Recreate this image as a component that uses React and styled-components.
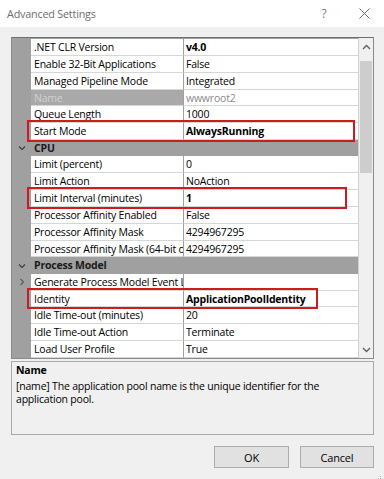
import React from "react";
import styled, { createGlobalStyle } from "styled-components";

const Global = createGlobalStyle`
  html, body { margin: 0; padding: 0; background: #f0f0f0; }
  body { font-family: "Open Sans", "Noto Sans", sans-serif; font-size: 10.5px; letter-spacing: -0.2px; color: #000; }
  * { box-sizing: border-box; }
`;

const Window = styled.div`
  width: 384px;
  height: 479px;
  background: #f0f0f0;
  position: relative;
  display: flex;
  flex-direction: column;
  overflow: hidden;
`;

const TitleBar = styled.div`
  height: 27px;
  background: #ffffff;
  display: flex;
  align-items: center;
  padding-left: 7px;
  color: #6d6d6d;
  font-size: 10.8px;
`;

const Title = styled.div`
  flex: 1;
`;

const TitleBtn = styled.div`
  width: 40px;
  display: flex;
  justify-content: center;
  color: #7a7a7a;
  font-size: 12px;
`;

const Body = styled.div`
  padding: 10px 10px 0 11px;
  display: flex;
  flex-direction: column;
`;

const Grid = styled.div`
  display: flex;
  border: 1px solid #8a8a8a;
  border-top-color: #6f6f6f;
  height: 322px;
  background: #a0a0a0;
`;

const Rows = styled.div`
  flex: 1;
  display: flex;
  flex-direction: column;
  padding-top: 1px;
`;

const Row = styled.div`
  position: relative;
  height: 16.85px;
  display: grid;
  grid-template-columns: 19px 153px 1fr;
  line-height: 16px;
`;

const Gutter = styled.div`
  background: #a0a0a0;
  display: flex;
  align-items: center;
  justify-content: center;
  color: #4a4a4a;
`;

const Label = styled.div`
  background: ${(p) => (p.$selected ? "#a9a9a9" : "#ffffff")};
  color: ${(p) => (p.$selected ? "#d0d0d0" : "#000")};
  border-bottom: 1px solid #d6d6d6;
  border-right: 1px solid #a0a0a0;
  padding-left: 3px;
  white-space: nowrap;
  overflow: hidden;
`;

const Value = styled.div`
  background: #ffffff;
  color: ${(p) => (p.$dim ? "#8a8a8a" : "#000")};
  font-weight: ${(p) => (p.$bold ? 700 : 400)};
  border-bottom: 1px solid #d6d6d6;
  padding-left: 2px;
  white-space: nowrap;
  overflow: hidden;
`;

const Category = styled.div`
  background: #a0a0a0;
  font-weight: 700;
  color: #1a1a1a;
  padding-left: 3px;
  grid-column: 2 / 4;
`;

const Mark = styled.div`
  position: absolute;
  z-index: 2;
  top: -3px;
  bottom: -2px;
  left: 15px;
  border: 2.5px solid #cf1a1f;
  pointer-events: none;
`;

const Scrollbar = styled.div`
  width: 15px;
  background: #f0f0f0;
  border-left: 1px solid #cfcfcf;
  display: flex;
  flex-direction: column;
`;

const ScrollBtn = styled.div`
  height: 17px;
  display: flex;
  align-items: center;
  justify-content: center;
`;

const Thumb = styled.div`
  margin: 6px 1px 0 1px;
  height: 112px;
  background: #cdcdcd;
`;

const Track = styled.div`
  flex: 1;
`;

const Desc = styled.div`
  margin-top: 2px;
  height: 74px;
  border: 1px solid #a9a9a9;
  padding: 2px 4px;
  line-height: 13.5px;
`;

const DescTitle = styled.div`
  font-weight: 700;
  margin-bottom: 2px;
`;

const Buttons = styled.div`
  display: flex;
  justify-content: flex-end;
  gap: 11px;
  padding: 11px 0 0 0;
`;

const Button = styled.div`
  width: ${(p) => p.$w}px;
  height: 22px;
  background: #e1e1e1;
  border: 1px solid #adadad;
  display: flex;
  align-items: center;
  justify-content: center;
  font-size: 11px;
`;

const Grip = styled.div`
  position: absolute;
  right: 2px;
  bottom: 2px;
  width: 6px;
  height: 6px;
`;

const Chevron = ({ dir }) => (
  <svg width="8" height="8" viewBox="0 0 8 8">
    {dir === "down" ? (
      <path d="M1 2.5 L4 5.5 L7 2.5" fill="none" stroke="#3c3c3c" strokeWidth="1.1" />
    ) : (
      <path d="M2.5 1 L5.5 4 L2.5 7" fill="none" stroke="#5a5a5a" strokeWidth="1.1" />
    )}
  </svg>
);

const ArrowIcon = ({ up }) => (
  <svg width="9" height="6" viewBox="0 0 9 6">
    <path
      d={up ? "M1 5 L4.5 1.5 L8 5" : "M1 1 L4.5 4.5 L8 1"}
      fill="none"
      stroke="#606060"
      strokeWidth="1.4"
    />
  </svg>
);

const data = [
  { l: ".NET CLR Version", v: "v4.0", bold: true },
  { l: "Enable 32-Bit Applications", v: "False" },
  { l: "Managed Pipeline Mode", v: "Integrated" },
  { l: "Name", v: "wwwroot2", selected: true, dim: true },
  { l: "Queue Length", v: "1000" },
  { l: "Start Mode", v: "AlwaysRunning", bold: true, mark: 328 },
  { cat: "CPU" },
  { l: "Limit (percent)", v: "0" },
  { l: "Limit Action", v: "NoAction" },
  { l: "Limit Interval (minutes)", v: "1", bold: true, mark: 320 },
  { l: "Processor Affinity Enabled", v: "False" },
  { l: "Processor Affinity Mask", v: "4294967295" },
  { l: "Processor Affinity Mask (64-bit option)", v: "4294967295" },
  { cat: "Process Model" },
  { l: "Generate Process Model Event Log Entry", v: "", expand: true },
  { l: "Identity", v: "ApplicationPoolIdentity", bold: true, mark: 291 },
  { l: "Idle Time-out (minutes)", v: "20" },
  { l: "Idle Time-out Action", v: "Terminate" },
  { l: "Load User Profile", v: "True" },
];

export default function App() {
  return (
    <Window>
      <Global />
      <TitleBar>
        <Title>Advanced Settings</Title>
        <TitleBtn>?</TitleBtn>
        <TitleBtn>
          <svg width="11" height="11" viewBox="0 0 11 11">
            <path d="M0.5 0.5 L10.5 10.5 M10.5 0.5 L0.5 10.5" stroke="#6a6a6a" strokeWidth="1" />
          </svg>
        </TitleBtn>
      </TitleBar>
      <Body>
        <Grid>
          <Rows>
            {data.map((r, i) =>
              r.cat ? (
                <Row key={i}>
                  <Gutter>
                    <Chevron dir="down" />
                  </Gutter>
                  <Category>{r.cat}</Category>
                </Row>
              ) : (
                <Row key={i}>
                  <Gutter>{r.expand ? <Chevron dir="right" /> : null}</Gutter>
                  <Label $selected={r.selected}>{r.l}</Label>
                  <Value $bold={r.bold} $dim={r.dim}>
                    {r.v}
                  </Value>
                  {r.mark ? <Mark style={{ width: r.mark }} /> : null}
                </Row>
              )
            )}
          </Rows>
          <Scrollbar>
            <ScrollBtn>
              <ArrowIcon up />
            </ScrollBtn>
            <Thumb />
            <Track />
            <ScrollBtn>
              <ArrowIcon />
            </ScrollBtn>
          </Scrollbar>
        </Grid>
        <Desc>
          <DescTitle>Name</DescTitle>
          <div>
            [name] The application pool name is the unique identifier for the
            <br />
            application pool.
          </div>
        </Desc>
        <Buttons>
          <Button $w={75}>OK</Button>
          <Button $w={74}>Cancel</Button>
        </Buttons>
      </Body>
      <Grip>
        <svg width="6" height="6" viewBox="0 0 6 6">
          <rect x="4" y="0" width="1" height="1" fill="#b0b0b0" />
          <rect x="2" y="2" width="1" height="1" fill="#b0b0b0" />
          <rect x="4" y="2" width="1" height="1" fill="#b0b0b0" />
          <rect x="0" y="4" width="1" height="1" fill="#b0b0b0" />
          <rect x="2" y="4" width="1" height="1" fill="#b0b0b0" />
          <rect x="4" y="4" width="1" height="1" fill="#b0b0b0" />
        </svg>
      </Grip>
    </Window>
  );
}
